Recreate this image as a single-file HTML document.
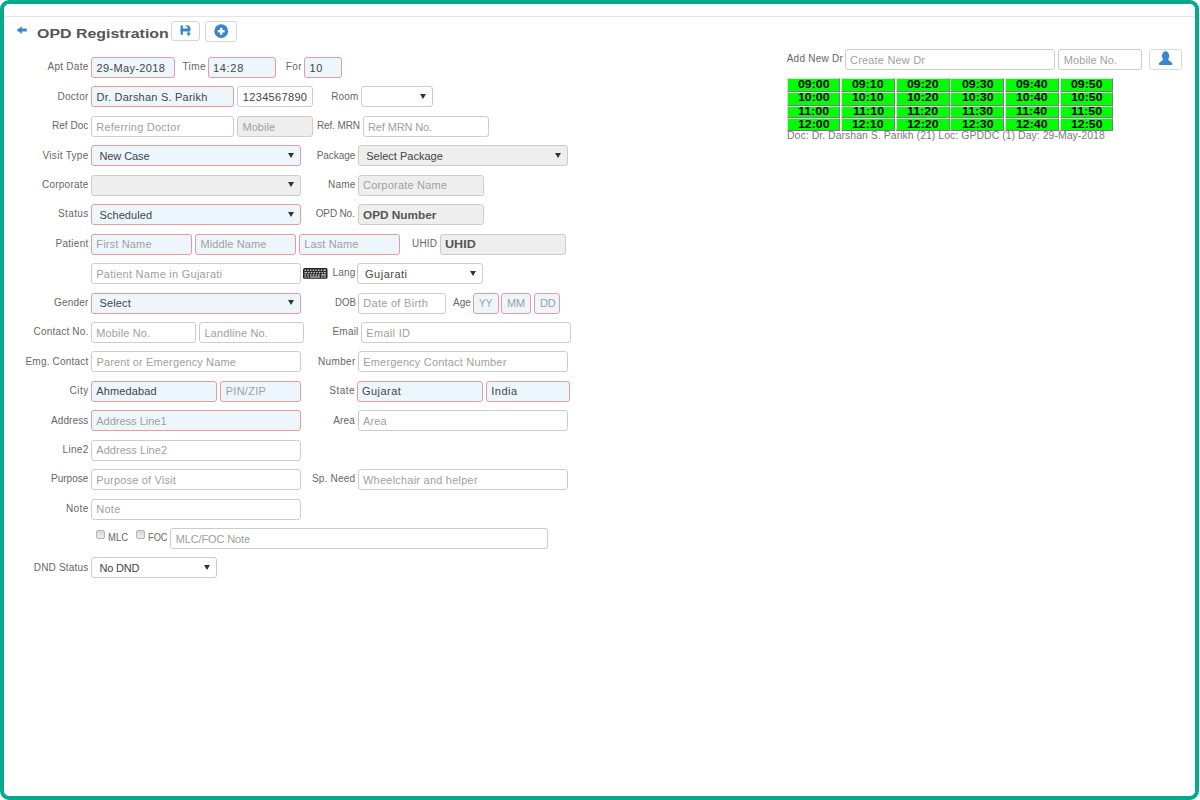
<!DOCTYPE html>
<html><head><meta charset="utf-8">
<style>
html,body{margin:0;padding:0;width:1200px;height:800px;overflow:hidden;background:#fff;}
body{font-family:"Liberation Sans",sans-serif;position:relative;}
#frame{position:absolute;left:0;top:0;width:1199px;height:800px;box-sizing:border-box;border:4px solid #04a98e;border-radius:9px;}
#hl{position:absolute;left:4px;top:16px;width:1191px;height:1px;background:#e3e3e3;}
.b{position:absolute;box-sizing:border-box;border:1px solid;border-radius:3px;}
.t{position:absolute;white-space:nowrap;line-height:normal;}
.lb{font-size:10px;color:#666;margin-top:-9.05px;}
.vl{font-size:11px;color:#444;margin-top:-9.96px;}
.ph{font-size:11px;color:#a0a0a0;margin-top:-9.96px;}
.bd{font-size:11px;color:#555;font-weight:bold;margin-top:-9.96px;}
.doc{font-size:10.5px;color:#7a7a7a;margin-top:-9.5px;}
.arr{position:absolute;width:0;height:0;border-left:3.2px solid transparent;border-right:3.2px solid transparent;border-top:5.8px solid #333;}
.cb{position:absolute;width:7px;height:7px;border:1px solid #b4b4b4;border-radius:2px;background:linear-gradient(#d8d8d8,#eeeeee);}
.tc{position:absolute;box-sizing:border-box;width:53.9px;background:#00ff00;border-top:1.6px solid #e2d8e4;border-left:1.4px solid #e2d8e4;border-right:1.6px solid #7f7987;border-bottom:1.6px solid #7f7987;}
.tt{position:absolute;width:53.9px;font-size:10px;font-weight:bold;color:#000;text-align:center;line-height:normal;}
.tt span{display:inline-block;transform:scaleX(1.24);}
.title{position:absolute;left:37.3px;top:38.4px;margin-top:-12.4px;font-size:13.7px;font-weight:bold;color:#555;white-space:nowrap;line-height:normal;transform-origin:0 0;transform:scaleX(1.163);}
.btn{position:absolute;box-sizing:border-box;border:1px solid #d4d4d4;border-radius:3px;background:#fff;}
</style></head><body>
<div id="frame"></div>
<div id="hl"></div>
<span class="t lb" style="letter-spacing:0.268px;left:47.5px;top:70.3px">Apt Date</span>
<span class="t lb" style="letter-spacing:0.269px;left:57.5px;top:99.74px">Doctor</span>
<span class="t lb" style="letter-spacing:0.029px;left:52px;top:129.18px">Ref Doc</span>
<span class="t lb" style="letter-spacing:0.311px;left:42.5px;top:158.62px">Visit Type</span>
<span class="t lb" style="letter-spacing:0.229px;left:42px;top:188.06px">Corporate</span>
<span class="t lb" style="letter-spacing:0.388px;left:58px;top:217.50000000000003px">Status</span>
<span class="t lb" style="letter-spacing:0.277px;left:55.5px;top:246.94000000000003px">Patient</span>
<span class="t lb" style="letter-spacing:0.188px;left:54px;top:305.82px">Gender</span>
<span class="t lb" style="letter-spacing:0.199px;left:33.5px;top:335.26000000000005px">Contact No.</span>
<span class="t lb" style="letter-spacing:0.201px;left:25.5px;top:364.70000000000005px">Emg. Contact</span>
<span class="t lb" style="letter-spacing:0.522px;left:69.5px;top:394.14000000000004px">City</span>
<span class="t lb" style="letter-spacing:0.102px;left:51px;top:423.58000000000004px">Address</span>
<span class="t lb" style="letter-spacing:0.333px;left:62.5px;top:453.02000000000004px">Line2</span>
<span class="t lb" style="letter-spacing:0.008px;left:51px;top:482.46000000000004px">Purpose</span>
<span class="t lb" style="letter-spacing:0.392px;left:66px;top:511.90000000000003px">Note</span>
<span class="t lb" style="letter-spacing:0.195px;left:33.75px;top:570.78px">DND Status</span>
<div class="b" style="left:91px;top:57.0px;width:84px;height:21px;border-color:#e79b9b;background:#eef6fd;"></div>
<span class="t vl" style="letter-spacing:0.347px;left:96.5px;top:71.6px">29-May-2018</span>
<span class="t lb" style="letter-spacing:0.38px;left:182.5px;top:70.3px">Time</span>
<div class="b" style="left:208px;top:57.0px;width:68px;height:21px;border-color:#e79b9b;background:#eef6fd;"></div>
<span class="t vl" style="letter-spacing:0.692px;left:213px;top:71.6px">14:28</span>
<span class="t lb" style="letter-spacing:0.4px;left:285.8px;top:70.3px">For</span>
<div class="b" style="left:304px;top:57.0px;width:38px;height:21px;border-color:#e79b9b;background:#eef6fd;"></div>
<span class="t vl" style="letter-spacing:0.75px;left:309.5px;top:71.6px">10</span>
<div class="b" style="left:91px;top:86.44px;width:143px;height:21px;border-color:#e79b9b;background:#eef6fd;"></div>
<span class="t vl" style="letter-spacing:0.221px;left:96.5px;top:101.03999999999999px">Dr. Darshan S. Parikh</span>
<div class="b" style="left:237px;top:86.44px;width:76px;height:21px;border-color:#cccccc;background:#ffffff;"></div>
<span class="t vl" style="letter-spacing:0.335px;left:242.8px;top:101.03999999999999px">1234567890</span>
<span class="t lb" style="letter-spacing:0.121px;left:331.25px;top:99.74px">Room</span>
<div class="b" style="left:361px;top:86.44px;width:72px;height:21px;border-color:#cccccc;background:#ffffff;"></div>
<span class="arr" style="left:420.4px;top:94.03999999999999px"></span>
<div class="b" style="left:91px;top:115.88px;width:143px;height:21px;border-color:#cccccc;background:#ffffff;"></div>
<span class="t ph" style="letter-spacing:0.223px;left:96.25px;top:130.48px">Referring Doctor</span>
<div class="b" style="left:237px;top:115.88px;width:76px;height:21px;border-color:#cccccc;background:#eeeeee;"></div>
<span class="t ph" style="letter-spacing:0.029px;left:242.5px;top:130.48px">Mobile</span>
<span class="t lb" style="letter-spacing:-0.122px;left:317px;top:129.18px">Ref. MRN</span>
<div class="b" style="left:363px;top:115.88px;width:126px;height:21px;border-color:#cccccc;background:#ffffff;"></div>
<span class="t ph" style="letter-spacing:-0.136px;left:368px;top:130.48px">Ref MRN No.</span>
<div class="b" style="left:91px;top:145.32px;width:210px;height:21px;border-color:#e79b9b;background:#eef6fd;"></div>
<span class="t vl" style="letter-spacing:-0.1px;left:99.5px;top:159.92px">New Case</span>
<span class="arr" style="left:288.4px;top:152.92px"></span>
<span class="t lb" style="letter-spacing:-0.062px;left:316.75px;top:158.62px">Package</span>
<div class="b" style="left:358px;top:145.32px;width:210px;height:21px;border-color:#cccccc;background:#eeeeee;"></div>
<span class="t vl" style="letter-spacing:0.009px;left:366.25px;top:159.92px">Select Package</span>
<span class="arr" style="left:555.4px;top:152.92px"></span>
<div class="b" style="left:91px;top:174.76px;width:210px;height:21px;border-color:#cccccc;background:#eeeeee;"></div>
<span class="arr" style="left:288.4px;top:182.35999999999999px"></span>
<span class="t lb" style="letter-spacing:0.204px;left:328px;top:188.06px">Name</span>
<div class="b" style="left:358px;top:174.76px;width:126px;height:21px;border-color:#cccccc;background:#eeeeee;"></div>
<span class="t ph" style="letter-spacing:0.209px;left:363px;top:189.35999999999999px">Corporate Name</span>
<div class="b" style="left:91px;top:204.20000000000002px;width:210px;height:21px;border-color:#e79b9b;background:#eef6fd;"></div>
<span class="t vl" style="letter-spacing:0.069px;left:99.5px;top:218.8px">Scheduled</span>
<span class="arr" style="left:288.4px;top:211.8px"></span>
<span class="t lb" style="letter-spacing:-0.161px;left:315.75px;top:217.50000000000003px">OPD No.</span>
<div class="b" style="left:358px;top:204.20000000000002px;width:126px;height:21px;border-color:#cccccc;background:#eeeeee;"></div>
<span class="t bd" style="transform-origin:0 0;transform:scaleX(1.0706);left:363.25px;top:218.8px">OPD Number</span>
<div class="b" style="left:91px;top:233.64000000000001px;width:101px;height:21px;border-color:#e79b9b;background:#eef6fd;"></div>
<span class="t ph" style="letter-spacing:0.169px;left:96.25px;top:248.24px">First Name</span>
<div class="b" style="left:195px;top:233.64000000000001px;width:101px;height:21px;border-color:#e79b9b;background:#eef6fd;"></div>
<span class="t ph" style="letter-spacing:0.099px;left:200.5px;top:248.24px">Middle Name</span>
<div class="b" style="left:299px;top:233.64000000000001px;width:101px;height:21px;border-color:#e79b9b;background:#eef6fd;"></div>
<span class="t ph" style="letter-spacing:0.106px;left:304.25px;top:248.24px">Last Name</span>
<span class="t lb" style="letter-spacing:0.199px;left:412px;top:246.94000000000003px">UHID</span>
<div class="b" style="left:440px;top:233.64000000000001px;width:126px;height:21px;border-color:#cccccc;background:#eeeeee;"></div>
<span class="t bd" style="transform-origin:0 0;transform:scaleX(1.1454);left:445px;top:248.24px">UHID</span>
<div class="b" style="left:91px;top:263.08000000000004px;width:210px;height:21px;border-color:#cccccc;background:#ffffff;"></div>
<span class="t ph" style="letter-spacing:0.259px;left:96.25px;top:277.68000000000006px">Patient Name in Gujarati</span>
<span class="t lb" style="letter-spacing:0.183px;left:332.5px;top:276.38000000000005px">Lang</span>
<div class="b" style="left:357px;top:263.08000000000004px;width:126px;height:21px;border-color:#cccccc;background:#ffffff;"></div>
<span class="t vl" style="letter-spacing:0.503px;left:365px;top:277.68000000000006px">Gujarati</span>
<span class="arr" style="left:470.4px;top:270.68000000000006px"></span>
<div class="b" style="left:91px;top:292.52px;width:210px;height:21px;border-color:#e79b9b;background:#eef6fd;"></div>
<span class="t vl" style="letter-spacing:0.144px;left:99.5px;top:307.12px">Select</span>
<span class="arr" style="left:288.4px;top:300.12px"></span>
<span class="t lb" style="transform-origin:0 0;transform:scaleX(0.9598);left:334.5px;top:305.82px">DOB</span>
<div class="b" style="left:358px;top:292.52px;width:88px;height:21px;border-color:#cccccc;background:#ffffff;"></div>
<span class="t ph" style="letter-spacing:0.284px;left:363.25px;top:307.12px">Date of Birth</span>
<span class="t lb" style="letter-spacing:0.002px;left:453px;top:305.82px">Age</span>
<div class="b" style="left:473px;top:292.52px;width:26px;height:21px;border-color:#e79b9b;background:#eef6fd;"></div>
<span class="t ph" style="transform-origin:0 0;transform:scaleX(0.9055);left:478.75px;top:307.12px">YY</span>
<div class="b" style="left:501px;top:292.52px;width:30px;height:21px;border-color:#e79b9b;background:#eef6fd;"></div>
<span class="t ph" style="letter-spacing:-0.278px;left:507px;top:307.12px">MM</span>
<div class="b" style="left:534px;top:292.52px;width:26px;height:21px;border-color:#e79b9b;background:#eef6fd;"></div>
<span class="t ph" style="letter-spacing:-0.091px;left:540px;top:307.12px">DD</span>
<div class="b" style="left:91px;top:321.96000000000004px;width:105px;height:21px;border-color:#cccccc;background:#ffffff;"></div>
<span class="t ph" style="letter-spacing:0.136px;left:96.25px;top:336.56000000000006px">Mobile No.</span>
<div class="b" style="left:199px;top:321.96000000000004px;width:105px;height:21px;border-color:#cccccc;background:#ffffff;"></div>
<span class="t ph" style="letter-spacing:0.138px;left:204.5px;top:336.56000000000006px">Landline No.</span>
<span class="t lb" style="letter-spacing:0.196px;left:332.5px;top:335.26000000000005px">Email</span>
<div class="b" style="left:361px;top:321.96000000000004px;width:210px;height:21px;border-color:#cccccc;background:#ffffff;"></div>
<span class="t ph" style="letter-spacing:0.32px;left:366.25px;top:336.56000000000006px">Email ID</span>
<div class="b" style="left:91px;top:351.40000000000003px;width:210px;height:21px;border-color:#cccccc;background:#ffffff;"></div>
<span class="t ph" style="letter-spacing:0.129px;left:96.5px;top:366.00000000000006px">Parent or Emergency Name</span>
<span class="t lb" style="letter-spacing:0.344px;left:318px;top:364.70000000000005px">Number</span>
<div class="b" style="left:358px;top:351.40000000000003px;width:210px;height:21px;border-color:#cccccc;background:#ffffff;"></div>
<span class="t ph" style="letter-spacing:0.186px;left:363.25px;top:366.00000000000006px">Emergency Contact Number</span>
<div class="b" style="left:91px;top:380.84000000000003px;width:126px;height:21px;border-color:#e79b9b;background:#eef6fd;"></div>
<span class="t vl" style="letter-spacing:0.121px;left:96.25px;top:395.44000000000005px">Ahmedabad</span>
<div class="b" style="left:220px;top:380.84000000000003px;width:81px;height:21px;border-color:#e79b9b;background:#eef6fd;"></div>
<span class="t ph" style="letter-spacing:0.256px;left:225.75px;top:395.44000000000005px">PIN/ZIP</span>
<span class="t lb" style="letter-spacing:0.485px;left:329.25px;top:394.14000000000004px">State</span>
<div class="b" style="left:357px;top:380.84000000000003px;width:126px;height:21px;border-color:#e79b9b;background:#eef6fd;"></div>
<span class="t vl" style="letter-spacing:0.454px;left:362px;top:395.44000000000005px">Gujarat</span>
<div class="b" style="left:486px;top:380.84000000000003px;width:84px;height:21px;border-color:#e79b9b;background:#eef6fd;"></div>
<span class="t vl" style="letter-spacing:0.485px;left:491.25px;top:395.44000000000005px">India</span>
<div class="b" style="left:91px;top:410.28000000000003px;width:210px;height:21px;border-color:#e79b9b;background:#eef6fd;"></div>
<span class="t ph" style="letter-spacing:-0.002px;left:96.25px;top:424.88000000000005px">Address Line1</span>
<span class="t lb" style="letter-spacing:0.142px;left:333.25px;top:423.58000000000004px">Area</span>
<div class="b" style="left:358px;top:410.28000000000003px;width:210px;height:21px;border-color:#cccccc;background:#ffffff;"></div>
<span class="t ph" style="letter-spacing:0.1px;left:363px;top:424.88000000000005px">Area</span>
<div class="b" style="left:91px;top:439.72px;width:210px;height:21px;border-color:#cccccc;background:#ffffff;"></div>
<span class="t ph" style="letter-spacing:0.039px;left:96.25px;top:454.32000000000005px">Address Line2</span>
<div class="b" style="left:91px;top:469.16px;width:210px;height:21px;border-color:#cccccc;background:#ffffff;"></div>
<span class="t ph" style="letter-spacing:0.18px;left:96.25px;top:483.76000000000005px">Purpose of Visit</span>
<span class="t lb" style="letter-spacing:0.192px;left:312px;top:482.46000000000004px">Sp. Need</span>
<div class="b" style="left:358px;top:469.16px;width:210px;height:21px;border-color:#cccccc;background:#ffffff;"></div>
<span class="t ph" style="letter-spacing:0.224px;left:363px;top:483.76000000000005px">Wheelchair and helper</span>
<div class="b" style="left:91px;top:498.6px;width:210px;height:21px;border-color:#cccccc;background:#ffffff;"></div>
<span class="t ph" style="letter-spacing:0.267px;left:96.25px;top:513.2px">Note</span>
<span class="cb" style="left:95.5px;top:530.04px"></span>
<span class="cb" style="left:135.5px;top:530.04px"></span>
<span class="t lb" style="transform-origin:0 0;transform:scaleX(0.9491);left:108.25px;top:541.3399999999999px">MLC</span>
<span class="t lb" style="transform-origin:0 0;transform:scaleX(0.9261);left:148.25px;top:541.3399999999999px">FOC</span>
<div class="b" style="left:170px;top:528.04px;width:378px;height:21px;border-color:#cccccc;background:#ffffff;"></div>
<span class="t ph" style="letter-spacing:-0.136px;left:175.75px;top:542.64px">MLC/FOC Note</span>
<div class="b" style="left:91px;top:557.48px;width:126px;height:21px;border-color:#cccccc;background:#ffffff;"></div>
<span class="t vl" style="letter-spacing:-0.181px;left:99.5px;top:572.08px">No DND</span>
<span class="arr" style="left:204.4px;top:565.08px"></span>
<span class="t lb" style="letter-spacing:0.244px;left:786.7px;top:61.7px">Add New Dr</span>
<div class="b" style="left:845px;top:49px;width:210px;height:21px;border-color:#cccccc;background:#ffffff;"></div>
<span class="t ph" style="letter-spacing:0.188px;left:850px;top:63.5px">Create New Dr</span>
<div class="b" style="left:1058px;top:49px;width:84px;height:21px;border-color:#cccccc;background:#ffffff;"></div>
<span class="t ph" style="letter-spacing:0.069px;left:1063.8px;top:63.5px">Mobile No.</span>
<div class="b" style="left:1149px;top:49px;width:33px;height:21px;border-color:#cccccc;background:#ffffff;border-color:#d9d9d9;"></div>
<div class="tc" style="left:786.60px;top:78.3px;height:14.0px"></div>
<div class="tt" style="left:786.60px;top:78.95px"><span>09:00</span></div>
<div class="tc" style="left:841.20px;top:78.3px;height:14.0px"></div>
<div class="tt" style="left:841.20px;top:78.95px"><span>09:10</span></div>
<div class="tc" style="left:895.80px;top:78.3px;height:14.0px"></div>
<div class="tt" style="left:895.80px;top:78.95px"><span>09:20</span></div>
<div class="tc" style="left:950.40px;top:78.3px;height:14.0px"></div>
<div class="tt" style="left:950.40px;top:78.95px"><span>09:30</span></div>
<div class="tc" style="left:1005.00px;top:78.3px;height:14.0px"></div>
<div class="tt" style="left:1005.00px;top:78.95px"><span>09:40</span></div>
<div class="tc" style="left:1059.60px;top:78.3px;height:14.0px"></div>
<div class="tt" style="left:1059.60px;top:78.95px"><span>09:50</span></div>
<div class="tc" style="left:786.60px;top:92.2px;height:13.5px"></div>
<div class="tt" style="left:786.60px;top:92.45px"><span>10:00</span></div>
<div class="tc" style="left:841.20px;top:92.2px;height:13.5px"></div>
<div class="tt" style="left:841.20px;top:92.45px"><span>10:10</span></div>
<div class="tc" style="left:895.80px;top:92.2px;height:13.5px"></div>
<div class="tt" style="left:895.80px;top:92.45px"><span>10:20</span></div>
<div class="tc" style="left:950.40px;top:92.2px;height:13.5px"></div>
<div class="tt" style="left:950.40px;top:92.45px"><span>10:30</span></div>
<div class="tc" style="left:1005.00px;top:92.2px;height:13.5px"></div>
<div class="tt" style="left:1005.00px;top:92.45px"><span>10:40</span></div>
<div class="tc" style="left:1059.60px;top:92.2px;height:13.5px"></div>
<div class="tt" style="left:1059.60px;top:92.45px"><span>10:50</span></div>
<div class="tc" style="left:786.60px;top:105.7px;height:12.5px"></div>
<div class="tt" style="left:786.60px;top:105.95px"><span>11:00</span></div>
<div class="tc" style="left:841.20px;top:105.7px;height:12.5px"></div>
<div class="tt" style="left:841.20px;top:105.95px"><span>11:10</span></div>
<div class="tc" style="left:895.80px;top:105.7px;height:12.5px"></div>
<div class="tt" style="left:895.80px;top:105.95px"><span>11:20</span></div>
<div class="tc" style="left:950.40px;top:105.7px;height:12.5px"></div>
<div class="tt" style="left:950.40px;top:105.95px"><span>11:30</span></div>
<div class="tc" style="left:1005.00px;top:105.7px;height:12.5px"></div>
<div class="tt" style="left:1005.00px;top:105.95px"><span>11:40</span></div>
<div class="tc" style="left:1059.60px;top:105.7px;height:12.5px"></div>
<div class="tt" style="left:1059.60px;top:105.95px"><span>11:50</span></div>
<div class="tc" style="left:786.60px;top:118.2px;height:12.8px"></div>
<div class="tt" style="left:786.60px;top:119.45px"><span>12:00</span></div>
<div class="tc" style="left:841.20px;top:118.2px;height:12.8px"></div>
<div class="tt" style="left:841.20px;top:119.45px"><span>12:10</span></div>
<div class="tc" style="left:895.80px;top:118.2px;height:12.8px"></div>
<div class="tt" style="left:895.80px;top:119.45px"><span>12:20</span></div>
<div class="tc" style="left:950.40px;top:118.2px;height:12.8px"></div>
<div class="tt" style="left:950.40px;top:119.45px"><span>12:30</span></div>
<div class="tc" style="left:1005.00px;top:118.2px;height:12.8px"></div>
<div class="tt" style="left:1005.00px;top:119.45px"><span>12:40</span></div>
<div class="tc" style="left:1059.60px;top:118.2px;height:12.8px"></div>
<div class="tt" style="left:1059.60px;top:119.45px"><span>12:50</span></div>
<span class="t doc" style="letter-spacing:0.024px;left:787px;top:138.5px">Doc: Dr. Darshan S. Parikh (21) Loc: GPDDC (1) Day: 29-May-2018</span>
<svg style="position:absolute;left:0;top:0" width="40" height="40"><path d="M16.5 30.2 L21.8 26.2 L21.8 28.6 L26.8 28.6 L26.8 31.6 L21.8 31.6 L21.8 33.8 Z" fill="#3b85cc"/></svg>
<div class="title">OPD Registration</div>
<div class="btn" style="left:171px;top:21px;width:29px;height:20px;"></div>
<svg style="position:absolute;left:171px;top:21px" width="29" height="20"><g fill="#3b85cc"><rect x="9.6" y="4.4" width="2.3" height="9.4"/><path d="M9.6 7.4 H16.4 V4.4 H17.6 Q19.5 5.2 19.5 7.6 V9.6 Q19 10.6 17.5 10.6 H9.6 Z"/><rect x="14.5" y="4.4" width="2.5" height="1.1"/><rect x="16.7" y="10.4" width="1.8" height="2.8"/><path d="M15.2 12.6 H20.1 L17.65 15.1 Z"/></g></svg>
<div class="btn" style="left:205px;top:21px;width:32px;height:21px;"></div>
<svg style="position:absolute;left:205px;top:21px" width="32" height="21"><circle cx="16.2" cy="10.2" r="6.9" fill="#3b85cc"/><rect x="15" y="6.8" width="2.4" height="6.9" fill="#fff"/><rect x="12.8" y="9.0" width="6.8" height="2.4" fill="#fff"/></svg>
<svg style="position:absolute;left:1149px;top:49px" width="33" height="21"><ellipse cx="16.6" cy="6.9" rx="3.6" ry="4.6" fill="#3b85cc"/><path d="M14.2 10.5 H19 L23.4 14.3 Q23.7 16 22.5 16 H10.7 Q9.5 16 9.9 14.3 Z" fill="#3b85cc"/></svg>
<svg style="position:absolute;left:303px;top:268px" width="25" height="11"><rect x="0" y="0" width="24.5" height="10.7" rx="1.5" fill="#222"/>
<g fill="#c8c8c8">
<rect x="1.5" y="1.5" width="1.6" height="1.4"/><rect x="4.2" y="1.5" width="1.6" height="1.4"/><rect x="6.9" y="1.5" width="1.6" height="1.4"/><rect x="9.6" y="1.5" width="1.6" height="1.4"/><rect x="12.3" y="1.5" width="1.6" height="1.4"/><rect x="15" y="1.5" width="1.6" height="1.4"/><rect x="17.7" y="1.5" width="1.6" height="1.4"/><rect x="20.4" y="1.5" width="2.4" height="1.4"/>
<rect x="1.5" y="3.9" width="2.6" height="1.4"/><rect x="5" y="3.9" width="1.6" height="1.4"/><rect x="7.7" y="3.9" width="1.6" height="1.4"/><rect x="10.4" y="3.9" width="1.6" height="1.4"/><rect x="13.1" y="3.9" width="1.6" height="1.4"/><rect x="15.8" y="3.9" width="1.6" height="1.4"/><rect x="18.5" y="3.9" width="1.6" height="1.4"/><rect x="21" y="3.9" width="1.8" height="1.4"/>
<rect x="1.5" y="6.2" width="1.6" height="1.4"/><rect x="4.2" y="6.2" width="1.6" height="1.4"/><rect x="6.9" y="6.2" width="1.6" height="1.4"/><rect x="9.6" y="6.2" width="1.6" height="1.4"/><rect x="12.3" y="6.2" width="1.6" height="1.4"/><rect x="15" y="6.2" width="1.6" height="1.4"/><rect x="18.2" y="6.2" width="4.6" height="1.4"/>
<rect x="1.5" y="8.4" width="2" height="1.2"/><rect x="4.5" y="8.4" width="1.6" height="1.2"/><rect x="7" y="8.4" width="10" height="1.2"/><rect x="18" y="8.4" width="1.6" height="1.2"/><rect x="20.6" y="8.4" width="2.2" height="1.2"/>
</g></svg>
</body></html>
